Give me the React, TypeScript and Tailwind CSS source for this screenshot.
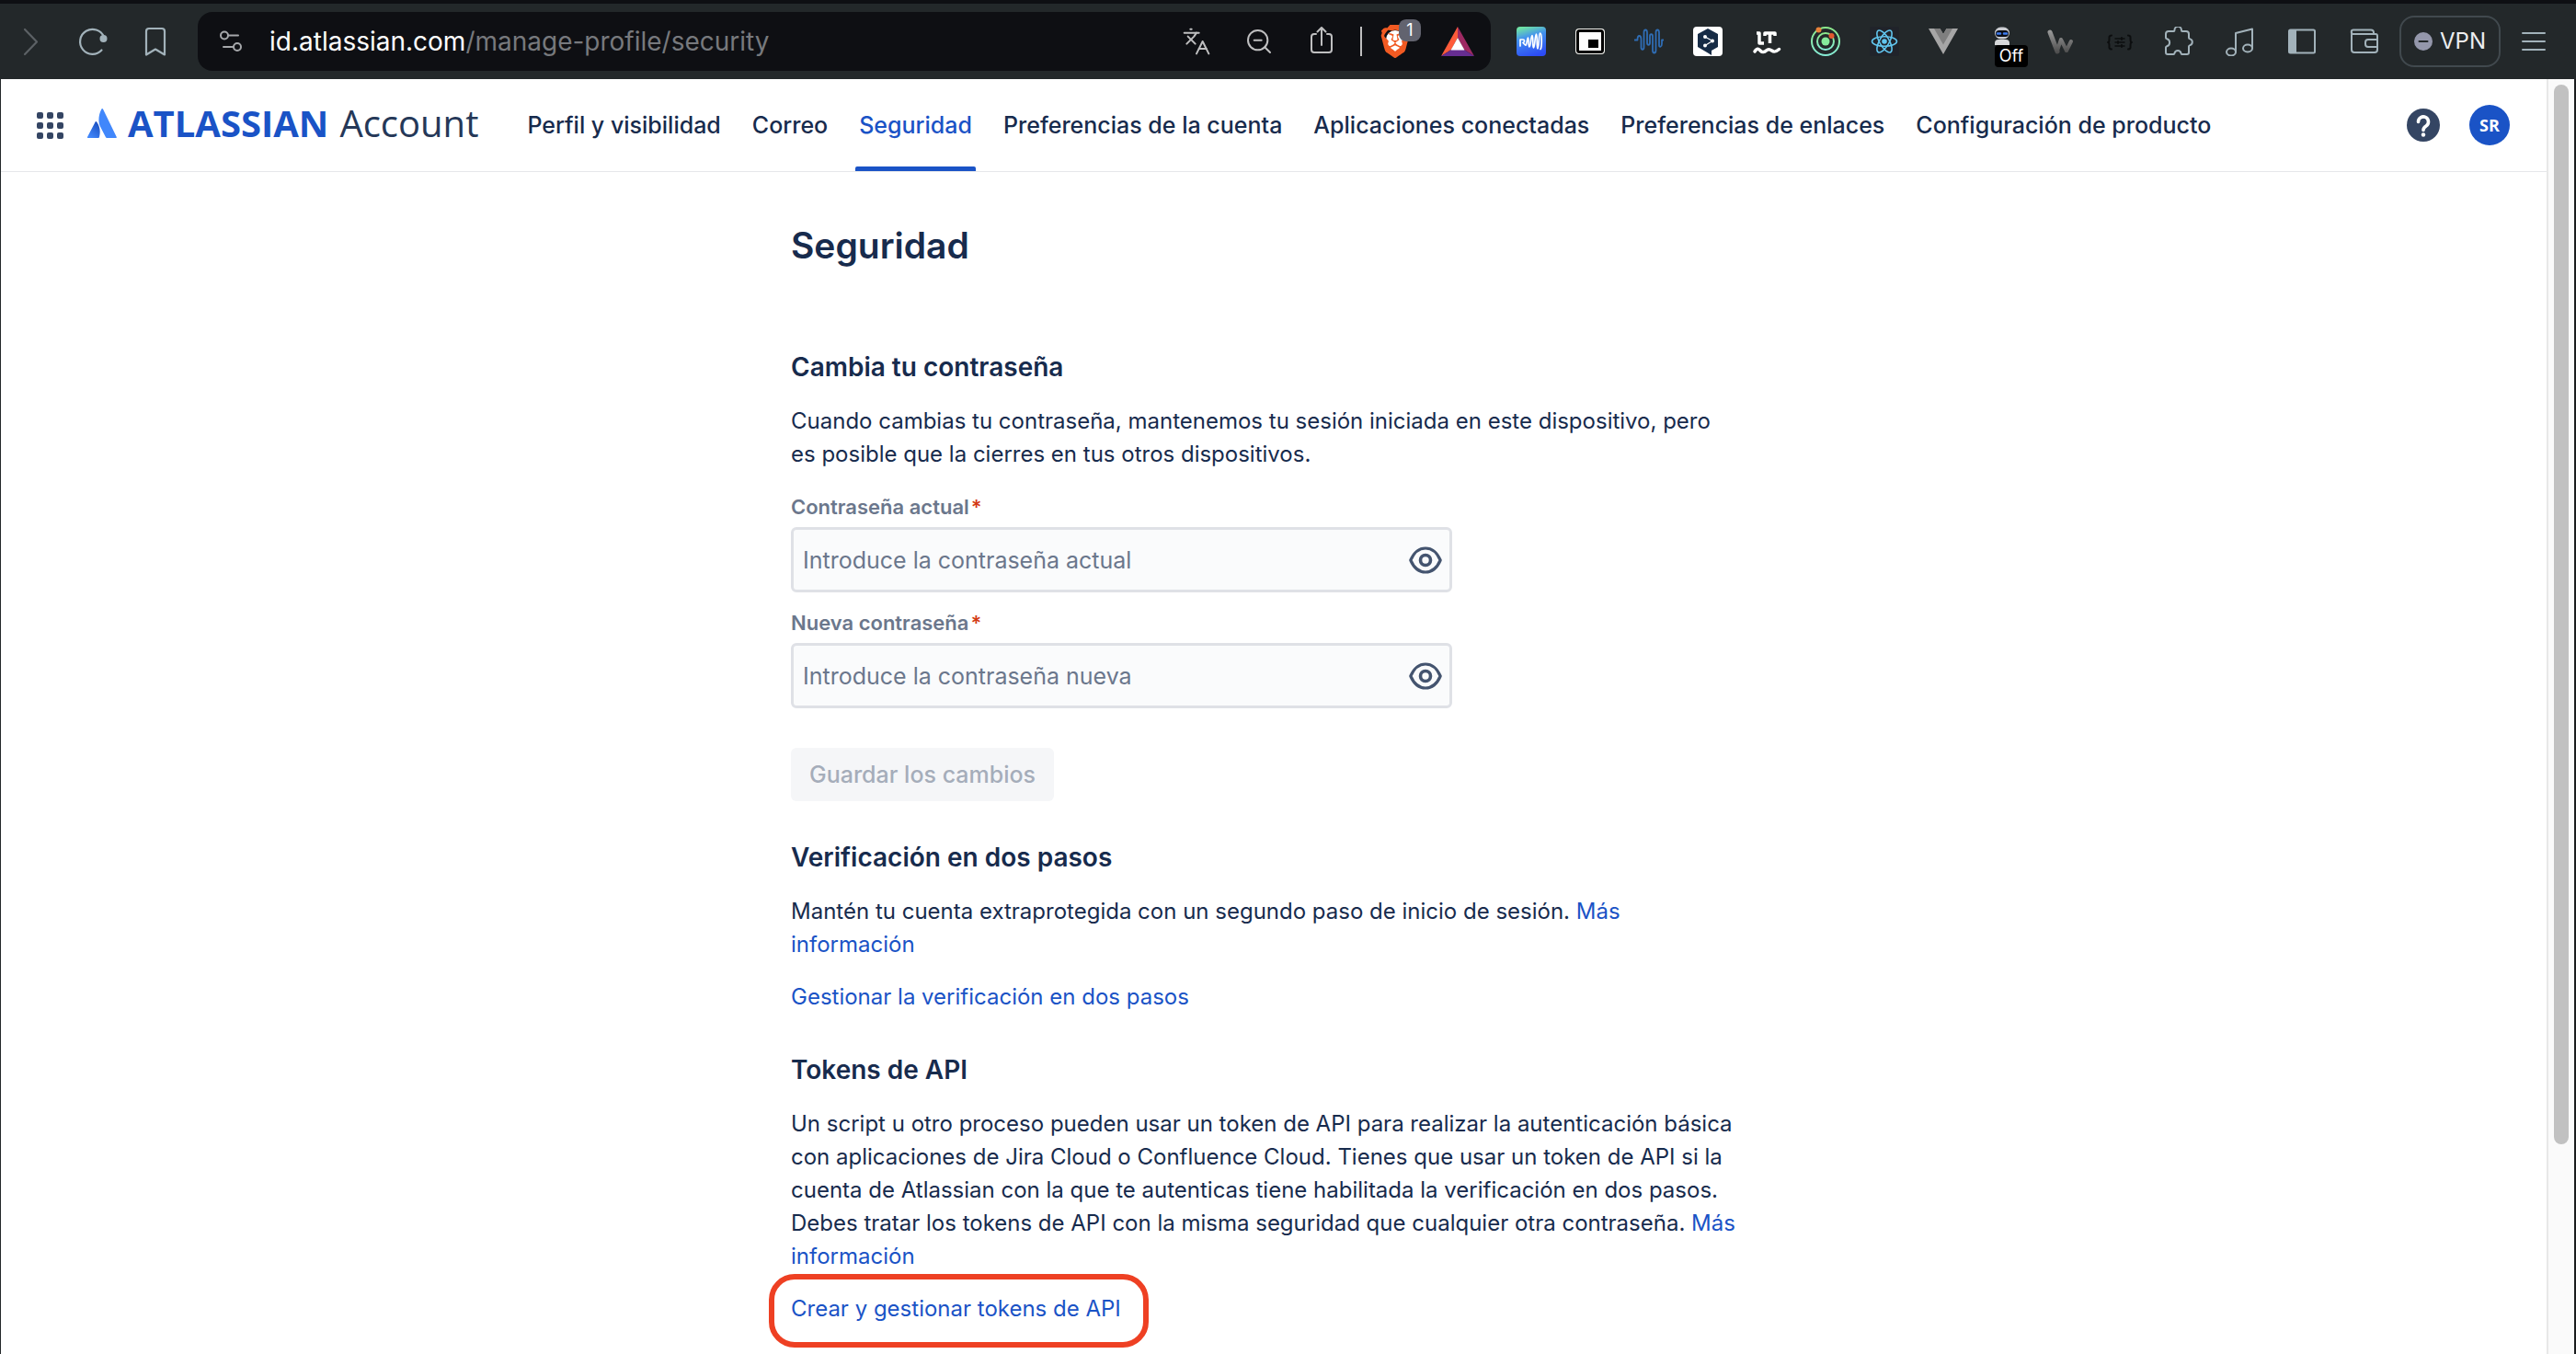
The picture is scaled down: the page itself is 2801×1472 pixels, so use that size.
import type { ReactNode } from 'react';
import { Languages, ZoomOut } from 'lucide-react';
import { SiBrave } from 'react-icons/si';

function IconButton({ label, className = 'w-8', children }: { label: string; className?: string; children: ReactNode }) {
  return (
    <button type="button" aria-label={label} className={`relative flex h-8 shrink-0 items-center justify-center ${className}`}>
      {children}
    </button>
  );
}

function Svg({ w = 32, h = 32, children }: { w?: number; h?: number; children: ReactNode }) {
  return (
    <svg width={w} height={h} viewBox={`0 0 ${w} ${h}`} fill="none" strokeLinecap="round" strokeLinejoin="round" className="shrink-0" aria-hidden="true">
      {children}
    </svg>
  );
}

function AddressBar() {
  return (
    <div className="flex h-16 min-w-0 flex-1 items-center rounded-2xl bg-[#0e0f13] pr-[18px] pl-6">
      <IconButton label="Información del sitio" className="w-6">
        <Svg w={24} h={24}>
          <g stroke="#a6a8ab" strokeWidth="2">
            <circle cx="5" cy="5.500" r="4" />
            <path d="M9 5.500h11" />
            <circle cx="19" cy="18" r="4" />
            <path d="M4 18h11" />
          </g>
        </Svg>
      </IconButton>
      <div className="ml-[30px] min-w-0 flex-1 truncate text-[28px] leading-9 text-[#77797d]">
        <span className="text-white">id.atlassian.com</span>/manage-profile/security
      </div>
      <div className="flex items-center gap-9 text-[#bfbfc0]">
        <IconButton label="Traducir">
          <Languages size={34} strokeWidth={1.5} />
        </IconButton>
        <IconButton label="Alejar">
          <ZoomOut size={36} strokeWidth={1.5} />
        </IconButton>
        <IconButton label="Compartir">
          <Svg>
            <g stroke="#bfbfc0" strokeWidth="2">
              <path d="M10 8H8a3 3 0 0 0-3 3v14a3 3 0 0 0 3 3h16a3 3 0 0 0 3-3V11a3 3 0 0 0-3-3h-2" />
              <path d="M16 20V1M11.500 5.500L16 1l4.500 4.500" />
            </g>
          </Svg>
        </IconButton>
      </div>
      <div className="mr-5 ml-[26px] h-8 w-0.5 bg-[#bfbfc0]" />
      <div className="flex items-center gap-[34px]">
        <IconButton label="Brave Shields">
          <span className="absolute top-1 left-1.5 h-6 w-5 rounded-full bg-white" />
          <SiBrave size={36} className="relative shrink-0 text-[#f15a22]" />
          <span className="absolute -top-2 left-5 flex size-6 items-center justify-center rounded-lg bg-[#62636f] text-[18px] leading-6 text-white">1</span>
        </IconButton>
        <IconButton label="Brave Rewards" className="w-9">
          <Svg w={36} h={32}>
            <path d="M18 0L0 32l11-7 7-13z" fill="#ff5b3a" />
            <path d="M18 0l18 32-11-7-7-13z" fill="#9e2a63" />
            <path d="M0 32h36l-11-7H11z" fill="#662d91" />
            <path d="M18 12l7.500 13.500h-15z" fill="#fff" />
          </Svg>
        </IconButton>
      </div>
    </div>
  );
}

function Extensions() {
  return (
    <div className="flex items-center gap-8">
      <IconButton label="Readwise">
        <Svg>
          <defs>
            <linearGradient id="rw" x1="0.300" y1="0" x2="0.600" y2="1">
              <stop offset="0" stopColor="#6fe3a5" />
              <stop offset="0.350" stopColor="#4392ee" />
              <stop offset="1" stopColor="#2c4bf5" />
            </linearGradient>
          </defs>
          <rect width="32" height="32" rx="4" fill="url(#rw)" />
          <path d="M4 21v-7h3c2 0 2 3 0 3.500L9.500 20c1.500 1.500 2-8 3-8s0 10 1.500 10S15.500 9.500 17 9.500s0 13.500 1.500 13.500S20 8 21.500 8s0 16 1.500 16 1-17 2.500-17c2.500 0 2 16 .5 17.500" stroke="#fff" strokeWidth="1.700" />
        </Svg>
      </IconButton>
      <IconButton label="Picture-in-Picture">
        <Svg>
          <rect y="2" width="32" height="28" rx="4" fill="#f3f3ee" />
          <rect x="2.500" y="4.500" width="27" height="23" rx="2" fill="#fff" stroke="#000" strokeWidth="3" />
          <path d="M14 14h11v9H14z" fill="#000" />
        </Svg>
      </IconButton>
      <IconButton label="Audio">
        <Svg>
          <path d="M.5 14.500h3c0-6 4-6 4 0v8c0 3 3 3 3 0v-16c0-4 3.500-4 3.500 0v11c0 3 3 3 3 0v-7c0-3 3-3 3 0v15c0 4 3.500 4 3.500 0v-19c0-4 3.500-4 3.500 0v14c0 2 3 2 3-2v-4h1.500" stroke="#2f6db5" strokeWidth="1.800" />
        </Svg>
      </IconButton>
      <IconButton label="DeepL">
        <Svg>
          <rect width="32" height="32" rx="4" fill="#fff" />
          <path d="M16 2l11 6v14l-7 4v5l-4-2.500L5 22V8z" fill="#162b45" />
          <path d="M13 11l8 4.500-8 5" stroke="#fff" strokeWidth="1.200" />
          <g fill="#fff">
            <circle cx="13" cy="11" r="2" />
            <circle cx="21" cy="15.500" r="2" />
            <circle cx="13" cy="20.500" r="2" />
          </g>
        </Svg>
      </IconButton>
      <IconButton label="LanguageTool">
        <Svg>
          <path d="M5 7h3v11h5M14 10V7h11v3M19.500 7v11" stroke="#fff" strokeWidth="3.500" strokeLinecap="butt" />
          <path d="M3 27c3-5 5-2 6.500-.5s4 1.500 6-.5 4-1.500 6 0 4 2 8-1.500" stroke="#fff" strokeWidth="3.500" />
        </Svg>
      </IconButton>
      <IconButton label="Órbitas">
        <Svg>
          <defs>
            <linearGradient id="orb" x1="0" y1="0" x2="0" y2="1">
              <stop offset="0" stopColor="#8ce98a" />
              <stop offset="1" stopColor="#86ecd6" />
            </linearGradient>
          </defs>
          <circle cx="16" cy="16" r="15" stroke="url(#orb)" strokeWidth="2" />
          <circle cx="16" cy="16" r="9" stroke="url(#orb)" strokeWidth="2" />
          <circle cx="16" cy="16" r="4.500" fill="#86ea9c" />
          <circle cx="8.500" cy="3.500" r="3" fill="#e8833a" />
          <circle cx="22.500" cy="10" r="3" fill="#e2582e" />
        </Svg>
      </IconButton>
      <IconButton label="React Developer Tools">
        <Svg>
          <rect width="32" height="32" rx="2" fill="#20232a" />
          <g stroke="#61c5ee" strokeWidth="1.600">
            <ellipse cx="16" cy="16" rx="13.500" ry="5.200" />
            <ellipse cx="16" cy="16" rx="13.500" ry="5.200" transform="rotate(60 16 16)" />
            <ellipse cx="16" cy="16" rx="13.500" ry="5.200" transform="rotate(120 16 16)" />
          </g>
          <circle cx="16" cy="16" r="2.800" fill="#61c5ee" />
        </Svg>
      </IconButton>
      <IconButton label="Vue Devtools">
        <Svg>
          <path d="M0 2h12.500L16 8l3.500-6H32L16 30z" fill="#a6a6a6" />
          <path d="M6 2h6.500L16 8l3.500-6H26L16 19.500z" fill="#7f7f7f" />
        </Svg>
      </IconButton>
      <IconButton label="Wall-E">
        <Svg>
          <rect x="8" y="0.500" width="16" height="13" rx="6.500" fill="#c9cbd0" />
          <rect x="9" y="4" width="14" height="7" rx="3.500" fill="#0b0d16" />
          <path d="M11 7.500h3M18 7.500h3" stroke="#3d7cf0" strokeWidth="2.500" />
          <path d="M8 20v-2a4 4 0 0 1 4-4h8a4 4 0 0 1 4 4v2z" fill="#d7d8da" />
        </Svg>
        <span className="absolute top-5 left-2 flex h-6 w-9 items-center justify-center rounded-sm bg-black text-[18px] leading-6 text-white">Off</span>
      </IconButton>
      <IconButton label="Wappalyzer">
        <Svg>
          <defs>
            <linearGradient id="wg" gradientUnits="userSpaceOnUse" x1="0" y1="4" x2="0" y2="28">
              <stop offset="0" stopColor="#9a9a9a" />
              <stop offset="1" stopColor="#4e4e4e" />
            </linearGradient>
          </defs>
          <path d="M4 6l8 21" stroke="url(#wg)" strokeWidth="5" />
          <path d="M12 26l4-12 6 12" stroke="url(#wg)" strokeWidth="4" />
          <path d="M22 26l5-10" stroke="url(#wg)" strokeWidth="4" />
        </Svg>
      </IconButton>
      <IconButton label="JSON">
        <Svg>
          <g stroke="#0c0e0f" strokeWidth="2">
            <path d="M7 9.500c-3 0-2.500 2-2.500 4S4 17 3 17c1 0 1.500 1.500 1.500 3.500S4 24.500 7 24.500" />
            <path d="M25 9.500c3 0 2.500 2 2.500 4s.5 3.500 1.500 3.500c-1 0-1.500 1.500-1.500 3.500s.5 4-2.500 4" />
            <path d="M11 13h10M11 17h10M11 21h10" strokeWidth="1.500" />
            <path d="M18 12v2M14 16v2M18 20v2" />
          </g>
        </Svg>
      </IconButton>
      <IconButton label="Extensiones">
        <Svg>
          <path d="M2 8a3 3 0 0 1 3-3h5.500c.8 0 1-.5 1-1.500a3.700 3.700 0 0 1 7.400 0c0 1 .2 1.500 1 1.500H24a3 3 0 0 1 3 3v4c0 .8.300 1.100 1.300 1.400a3.500 3.500 0 0 1 0 6.700c-1 .3-1.300.6-1.300 1.400V28a2 2 0 0 1-2 2h-5.500c-.6 0-.9-.4-1-1.200a3.600 3.600 0 0 0-7 0c-.2.800-.4 1.200-1 1.200H4a2 2 0 0 1-2-2v-5.500c0-.8.300-1 1.200-1.300a4.200 4.200 0 0 0 0-8C2.300 13 2 12.800 2 12z" stroke="#a2b2ba" strokeWidth="2" />
        </Svg>
      </IconButton>
    </div>
  );
}

function BrowserToolbar() {
  return (
    <div className="flex h-[86px] items-center border-t-4 border-[#0e0f13] bg-[#23282a] pr-[33px] pl-[17px]">
      <div className="mr-[30px] flex items-center gap-9">
        <IconButton label="Adelante">
          <Svg>
            <path d="M10 3l13 13.500L10 30" stroke="#5c6165" strokeWidth="2.200" />
          </Svg>
        </IconButton>
        <IconButton label="Recargar">
          <Svg>
            <path d="M25.500 25.500A13.500 13.500 0 1 1 28 11" stroke="#a2b2ba" strokeWidth="2.200" />
            <circle cx="27.500" cy="13" r="4" fill="#a2b2ba" />
          </Svg>
        </IconButton>
        <IconButton label="Marcador">
          <Svg>
            <path d="M6 5a3 3 0 0 1 3-3h14a3 3 0 0 1 3 3v25.500l-10-6-10 6z" stroke="#a2b2ba" strokeWidth="2.200" />
          </Svg>
        </IconButton>
      </div>
      <AddressBar />
      <div className="ml-7">
        <Extensions />
      </div>
      <div className="mr-[22px] ml-[34px] flex items-center gap-9">
        <IconButton label="Multimedia">
          <Svg>
            <g stroke="#a2b2ba" strokeWidth="2">
              <path d="M12 27.500V7l18-4.500v21" />
              <ellipse cx="7" cy="27.500" rx="5" ry="4" />
              <ellipse cx="25" cy="23.500" rx="5" ry="4" />
            </g>
          </Svg>
        </IconButton>
        <IconButton label="Panel lateral">
          <Svg>
            <rect x="2" y="3.500" width="28" height="25" rx="1.500" stroke="#a2b2ba" strokeWidth="2" />
            <path d="M2 3.500h8v25H2z" fill="#a2b2ba" />
          </Svg>
        </IconButton>
        <IconButton label="Cartera">
          <Svg>
            <g stroke="#a2b2ba" strokeWidth="2">
              <path d="M2 6v19a3 3 0 0 0 3 3h22a3 3 0 0 0 3-3V10a2 2 0 0 0-2-2H4a2 2 0 0 1 0-4.500h19a3 3 0 0 1 3 3V8" />
              <path d="M30 14H20a3 3 0 0 0-3 3v2a3 3 0 0 0 3 3h10" />
            </g>
          </Svg>
        </IconButton>
      </div>
      <button type="button" className="flex h-14 w-[110px] items-center justify-center gap-2 rounded-2xl border-2 border-[#41494e] text-[24px] leading-8 text-[#eceef0]">
        <Svg w={20} h={20}>
          <circle cx="10" cy="10" r="10" fill="#9497ab" />
          <path d="M5.500 10h9" stroke="#23282a" strokeWidth="2" />
        </Svg>
        VPN
      </button>
      <div className="ml-[23px]">
        <IconButton label="Menú" className="w-[26px]">
          <Svg w={26} h={22}>
            <path d="M1 2h24M1 11h24M1 20h24" stroke="#a2b2ba" strokeWidth="2" />
          </Svg>
        </IconButton>
      </div>
    </div>
  );
}

const tabs = [
  'Perfil y visibilidad',
  'Correo',
  'Seguridad',
  'Preferencias de la cuenta',
  'Aplicaciones conectadas',
  'Preferencias de enlaces',
  'Configuración de producto',
];

function SiteHeader() {
  return (
    <header className="flex h-[101px] items-center border-b border-[#e6e7ea] pr-10 pl-[39px]">
      <button type="button" aria-label="Cambiar de aplicación" className="grid grid-cols-3 gap-1">
        {Array.from({ length: 9 }, (_, i) => (
          <span key={i} className="size-[7px] rounded-xs bg-[#344563]" />
        ))}
      </button>
      <a href="#inicio" className="ml-[26px] flex items-center pb-1 font-['Open_Sans',sans-serif] text-[40px] leading-[56px]">
        <svg width="32" height="32" viewBox="0 0 32 32" aria-hidden="true">
          <defs>
            <linearGradient id="atl" x1="0.900" y1="0.100" x2="0.300" y2="1">
              <stop offset="0" stopColor="#1a4fc0" />
              <stop offset="1" stopColor="#4187fb" />
            </linearGradient>
          </defs>
          <path d="M8.800 14.300c.4-.6 1-.4 1.300.2 3.600 5 4.300 10 2.900 16.500-.1.600-.5 1-1 1H.8c-.7 0-1-.6-.7-1.200z" fill="url(#atl)" />
          <path d="M15.200.9c.5-1.200 1.400-1.200 2 0l14.600 30c.3.600 0 1.100-.7 1.100h-9.900c-.7 0-1-.3-1.300-.9L13.700 19C11.400 13.500 12.500 6 15.200.9z" fill="#4187fb" />
        </svg>
        <span className="ml-3 font-bold text-[#1a53c6]">ATLASSIAN</span>
        <span className="ml-3 text-[#253858]">Account</span>
      </a>
      <nav aria-label="Cuenta" className="ml-[49px] flex gap-[26px] self-stretch whitespace-nowrap">
        {tabs.map((tab) =>
          tab === 'Seguridad' ? (
            <a key={tab} href="#seguridad" aria-current="page" className="relative flex items-center px-1 text-[25px] leading-9 font-medium text-[#1a53c6]">
              {tab}
              <span className="absolute inset-x-0 bottom-0 h-[5px] rounded-t-xs bg-[#1a53c6]" />
            </a>
          ) : (
            <a key={tab} href="#cuenta" className="flex items-center px-1 text-[25px] leading-9 font-medium">
              {tab}
            </a>
          ),
        )}
      </nav>
      <div className="ml-auto flex items-center gap-8">
        <button type="button" aria-label="Ayuda" className="flex">
          <Svg w={36} h={36}>
            <circle cx="18" cy="18" r="18" fill="#344563" />
            <path d="M12.500 14.500a5.500 5.500 0 1 1 8.500 4.500c-2 1.300-3 2-3 4.500" stroke="#fff" strokeWidth="3.600" />
            <circle cx="18" cy="28.500" r="2.200" fill="#fff" />
          </Svg>
        </button>
        <button type="button" aria-label="Perfil de SR" className="flex size-11 items-center justify-center rounded-full bg-[#1a53c6] font-['Open_Sans',sans-serif] text-[18px] leading-6 font-bold text-white">
          SR
        </button>
      </div>
    </header>
  );
}

function PasswordField({ id, label, placeholder }: { id: string; label: string; placeholder: string }) {
  return (
    <div>
      <label htmlFor={id} className="mb-2 flex gap-0.5 text-[22px] leading-7 font-semibold text-[#6b778c]">
        {label}
        <span className="text-[#d33a15]" aria-hidden="true">*</span>
      </label>
      <div className="flex h-[71px] max-w-[719px] items-center rounded-md border-3 border-[#dfe1e6] bg-[#fafbfc] pr-2 pl-2.5">
        <input id={id} type="password" required placeholder={placeholder} className="min-w-0 flex-1 bg-transparent text-[25px] leading-9 outline-none placeholder:text-[#6b778c] placeholder:opacity-100" />
        <button type="button" aria-label="Mostrar contraseña" className="flex">
          <Svg w={36} h={30}>
            <path d="M1.800 15C5.500 6.500 11 2 18 2s12.500 4.500 16.200 13C30.500 23.500 25 28 18 28S5.500 23.500 1.800 15z" stroke="#44546f" strokeWidth="3.200" />
            <circle cx="18" cy="15" r="5.500" stroke="#44546f" strokeWidth="3.600" />
          </Svg>
        </button>
      </div>
    </div>
  );
}

function Link({ children }: { children: ReactNode }) {
  return (
    <a href="#enlace" className="text-[#1a53c6]">
      {children}
    </a>
  );
}

function Heading({ children }: { children: ReactNode }) {
  return <h2 className="mb-[23px] text-[28px] leading-9 font-semibold">{children}</h2>;
}

function SecurityPage() {
  return (
    <main className="mx-auto max-w-[1050px] pt-14 pb-7 text-[24px] leading-9">
      <h1 className="text-[39px] leading-12 font-semibold">Seguridad</h1>
      <section className="mt-[90px]">
        <Heading>Cambia tu contraseña</Heading>
        <p className="max-w-[1032px]">
          Cuando cambias tu contraseña, mantenemos tu sesión iniciada en este dispositivo, pero es posible que la cierres en tus otros dispositivos.
        </p>
        <form className="mt-[25px] flex flex-col gap-[19px]">
          <PasswordField id="actual" label="Contraseña actual" placeholder="Introduce la contraseña actual" />
          <PasswordField id="nueva" label="Nueva contraseña" placeholder="Introduce la contraseña nueva" />
          <button type="submit" disabled className="mt-6 h-[58px] self-start rounded-md bg-[#f5f6f8] px-5 text-[25px] leading-9 font-medium text-[#a5adba]">
            Guardar los cambios
          </button>
        </form>
      </section>
      <section className="mt-[43px]">
        <Heading>Verificación en dos pasos</Heading>
        <p className="max-w-[1032px]">
          Mantén tu cuenta extraprotegida con un segundo paso de inicio de sesión. <Link>Más información</Link>
        </p>
        <p className="mt-[21px]">
          <Link>Gestionar la verificación en dos pasos</Link>
        </p>
      </section>
      <section className="mt-[43px]">
        <Heading>Tokens de API</Heading>
        <p className="max-w-[1032px]">
          Un script u otro proceso pueden usar un token de API para realizar la autenticación básica con aplicaciones de Jira Cloud o Confluence Cloud. Tienes que usar un token de API si la cuenta de Atlassian con la que te autenticas tiene habilitada la verificación en dos pasos. Debes tratar los tokens de API con la misma seguridad que cualquier otra contraseña. <Link>Más información</Link>
        </p>
        <p className="relative mt-[21px] w-fit">
          <Link>Crear y gestionar tokens de API</Link>
          <span className="pointer-events-none absolute -top-5 -right-[30px] -bottom-6 -left-6 rounded-[28px] border-6 border-[#ee4023]" />
        </p>
      </section>
    </main>
  );
}

export default function App() {
  return (
    <div className="flex min-h-screen flex-col bg-white font-['Inter',sans-serif] text-[#172b4d]">
      <BrowserToolbar />
      <div className="flex flex-1 border-l border-[#23282a]">
        <div className="min-w-0 flex-1">
          <SiteHeader />
          <SecurityPage />
        </div>
        <div className="w-8 border-r-2 border-l-2 border-l-[#e8e8e8] border-r-[#1a1c1e] bg-[#fafafa] pt-1.5" aria-hidden="true">
          <div className="mx-auto h-[1152px] w-4 rounded-full bg-[#c1c1c1]" />
        </div>
      </div>
    </div>
  );
}
